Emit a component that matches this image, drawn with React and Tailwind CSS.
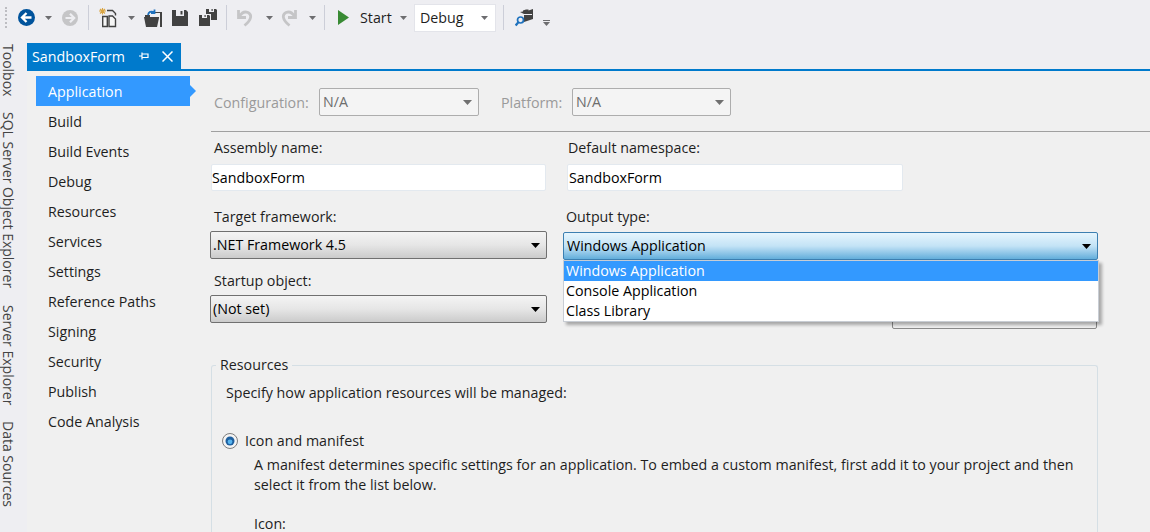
import React from 'react';

const pages = ['Application', 'Build', 'Build Events', 'Debug', 'Resources', 'Services', 'Settings', 'Reference Paths', 'Signing', 'Security', 'Publish', 'Code Analysis'];
const rail = ['Toolbox', 'SQL Server Object Explorer', 'Server Explorer', 'Data Sources'];

const Caret = ({ className = '' }) => (
  <svg width="7" height="4" viewBox="0 0 7 4" className={`shrink-0 ${className}`}>
    <path d="M0 0h7L3.5 4z" fill="#6d6d70" />
  </svg>
);

const Sep = ({ className = '' }) => <div className={`w-px h-[25px] bg-[#ccced8] shrink-0 ${className}`} />;

const Back = () => (
  <svg width="17" height="17" viewBox="0 0 17 17" className="shrink-0">
    <circle cx="8.5" cy="8.5" r="8.5" fill="#00539c" />
    <path d="M8.5 4 4 8.5 8.5 13M4.5 8.5H13.5" fill="none" stroke="#fff" strokeWidth="2.3" />
  </svg>
);

const Forward = () => (
  <svg width="16" height="16" viewBox="0 0 16 16" className="shrink-0">
    <circle cx="8" cy="8" r="8" fill="#c5c5c7" />
    <path d="M8 3.8 12.2 8 8 12.2M11.8 8H3.5" fill="none" stroke="#eeeef2" strokeWidth="2.2" />
  </svg>
);

const NewProject = () => (
  <svg width="18" height="20" viewBox="0 0 18 20" className="shrink-0">
    <path d="M0 3h7M3.5 0v6.5M1 1l5 4.5M6 1 1 5.5" stroke="#d9a441" strokeWidth="1.1" />
    <path d="M8 2.5h5.5l3 3v2" fill="none" stroke="#424242" strokeWidth="1.4" />
    <path d="M3.7 8.5v10h4.6v-10z" fill="#f6f6f6" stroke="#424242" strokeWidth="1.4" />
    <path d="M10 8h3.5l3 3v7.5H10z" fill="#f6f6f6" stroke="#424242" strokeWidth="1.4" />
  </svg>
);

const OpenFolder = () => (
  <svg width="18" height="18" viewBox="0 0 18 18" className="shrink-0">
    <path d="M1 6h5v2h-5z" fill="#424242" />
    <path d="M8 3h10v15h-2V5H8z" fill="#424242" />
    <path d="M11 4h5v13h-1V8h-4z" fill="#f0f0f0" />
    <path d="M0 8h15v1l-2 9H2z" fill="#424242" />
    <path d="M4 6C4.500 3 7 1.800 10 3M10.500.5v3.500H7" fill="none" stroke="#1e71bd" strokeWidth="1.8" />
  </svg>
);

const Save = () => (
  <svg width="16" height="16" viewBox="0 0 16 16" className="shrink-0">
    <path d="M0 0h14l2 2v14H0z" fill="#424242" />
    <path d="M4 0h8v6H4z" fill="#eeeef2" />
    <path d="M8.500 1h2v3.500h-2z" fill="#424242" />
  </svg>
);

const SaveAll = () => (
  <svg width="18" height="17" viewBox="0 0 18 17" className="shrink-0">
    <path d="M7 0h10l1 1v10h-6V5H7z" fill="#424242" />
    <path d="M10 0h5v3h-5z" fill="#eeeef2" />
    <path d="M12.500 0h1.200v2h-1.200z" fill="#424242" />
    <path d="M0 6h10l1 1v10H0z" fill="#424242" />
    <path d="M3 6h5v3H3z" fill="#eeeef2" />
    <path d="M5.500 6h1.200v2H5.500z" fill="#424242" />
  </svg>
);

const Undo = ({ flip }) => (
  <svg width="16" height="18" viewBox="0 0 16 18" className={`shrink-0 ${flip ? '-scale-x-100' : ''}`}>
    <path d="M1.500 1v7.500H9M2.500 7.500C5 3 8.500 2.500 11 3.500c4 2 4 7-3.500 13" fill="none" stroke="#c5c5c7" strokeWidth="2.8" />
  </svg>
);

const Find = () => (
  <svg width="18" height="18" viewBox="0 0 18 18" className="shrink-0">
    <path d="M5 3l3-.5V1.500l3-1h2.500v1L18 0v10l-9 3V5z" fill="#424242" />
    <path d="M9 5.500h8" stroke="#eeeef2" />
    <circle cx="5.500" cy="11" r="3" fill="#eeeef2" stroke="#1e71bd" strokeWidth="1.7" />
    <path d="M3.300 13.300 .7 16.500" stroke="#1e71bd" strokeWidth="2.200" />
  </svg>
);

const Toolbar = () => (
  <div className="h-[43px] pb-[8px] flex items-center text-[14.25px] text-[#1e1e1e] shrink-0">
    <div className="w-[3px] h-[21px] ml-[5px] mr-[10px] border-l-2 border-dotted border-[#bdbdc2] shrink-0" />
    <Back />
    <Caret className="ml-[10px] mr-[10px]" />
    <Forward />
    <Sep className="mx-[10px]" />
    <NewProject />
    <Caret className="ml-[11px] mr-[9px]" />
    <OpenFolder />
    <div className="w-[10px] shrink-0" />
    <Save />
    <div className="w-[11px] shrink-0" />
    <SaveAll />
    <Sep className="ml-[9px] mr-[10px]" />
    <Undo />
    <Caret className="ml-[13px] mr-[8px]" />
    <Undo flip />
    <Caret className="ml-[12px] mr-[8px]" />
    <Sep />
    <svg width="11" height="15" viewBox="0 0 11 15" className="ml-[13px] mr-[11px] shrink-0">
      <path d="M0 0 11 7.500 0 15z" fill="#388a34" />
    </svg>
    <span className="w-[31px] pt-[1px]">Start</span>
    <Caret className="ml-[9px] mr-[7px]" />
    <div className="w-[82px] h-[28px] bg-white border border-[#e3e4ea] flex items-center justify-between pl-[5px] pr-[7px] shrink-0">
      <span className="pt-[1px]">Debug</span>
      <Caret />
    </div>
    <Sep className="ml-[7px] mr-[11px]" />
    <Find />
    <div className="ml-[10px] mt-[10px] flex flex-col gap-[1px]">
      <div className="w-[7px] h-px bg-[#6d6d70]" />
      <Caret />
    </div>
  </div>
);

const Rail = () => (
  <div className="w-[27px] shrink-0 [writing-mode:vertical-rl] flex gap-[16px] text-[14px] leading-[16px] pt-[1px] pr-[11px] text-[#444]">
    {rail.map((name) => <span key={name}>{name}</span>)}
  </div>
);

const Tab = () => (
  <div className="h-[28px] shrink-0 border-b-2 border-[#007acc]">
    <div className="w-[154px] h-[27px] bg-[#007acc] text-white text-[14.25px] flex items-center pl-[5px]">
      <span>SandboxForm</span>
      <svg width="11" height="11" viewBox="0 0 11 11" className="ml-[14px]">
        <path d="M3 1.500v7M3 3h6v3.500H3M0 5h3" fill="none" stroke="#fff" strokeWidth="1.200" />
      </svg>
      <svg width="11" height="11" viewBox="0 0 11 11" className="ml-[12px]">
        <path d="M.5.5l10 10M10.500.5l-10 10" stroke="#fff" strokeWidth="1.500" />
      </svg>
    </div>
  </div>
);

const Sidebar = () => (
  <div className="w-[175px] shrink-0 pt-[5px] pl-[9px]">
    {pages.map((page, i) => (
      <div
        key={page}
        className={`relative w-[154px] h-[30px] pl-[12px] pt-[2px] flex items-center text-[14.25px] ${i === 0 ? 'bg-[#3399ff] text-white' : 'text-[#1e1e1e]'}`}
      >
        {page}
        {i === 0 && (
          <svg width="6" height="12" viewBox="0 0 6 12" className="absolute -right-[6px] top-[9px]">
            <path d="M0 0l6 6-6 6z" fill="#3399ff" />
          </svg>
        )}
      </div>
    ))}
  </div>
);

const Arrow = ({ color = '#000' }) => (
  <svg width="9" height="5" viewBox="0 0 9 5" className="shrink-0">
    <path d="M0 0h9L4.500 5z" fill={color} />
  </svg>
);

const DisabledSelect = ({ className }) => (
  <div className={`${className} h-[28px] rounded-[2px] border border-[#adadad] bg-[#f4f4f4] text-[#6d6d6d] flex items-center justify-between pl-[3px] pr-[6px] shrink-0`}>
    <span>N/A</span>
    <Arrow color="#707070" />
  </div>
);

const Combo = ({ value }) => (
  <div className="w-[337px] -ml-px h-[28px] rounded-[2px] border border-[#707070] bg-linear-to-b from-[#f4f4f4] via-[#e6e6e6] via-50% to-[#cbcbcb] flex items-center justify-between pl-[2px] pr-[6px] text-black">
    <span>{value}</span>
    <Arrow />
  </div>
);

const Input = ({ value, className }) => (
  <div className={`${className} h-[27px] rounded-[2px] border border-[#e3e9ef] bg-white flex items-center text-black`}>
    {value}
  </div>
);

const Form = () => (
  <div className="flex-1 min-w-0 text-[14.25px] leading-[20px] text-[#1e1e1e] pl-[9px]">
    <div className="h-[43px] mt-[17px] pl-[3px] flex items-start gap-[10px] text-[#9a9a9a]">
      <span className="h-[30px] flex items-center w-[95px] shrink-0 whitespace-nowrap">Configuration:</span>
      <DisabledSelect className="w-[160px]" />
      <div className="w-[2px] shrink-0" />
      <span className="h-[30px] flex items-center w-[61px] shrink-0">Platform:</span>
      <DisabledSelect className="w-[159px]" />
    </div>
    <div className="h-px bg-[#a0a0a0]" />

    <div className="flex mt-[6px]">
      <div className="w-[352px] shrink-0">
        <div className="pl-[3px] h-[20px]">Assembly name:</div>
        <Input value="SandboxForm" className="w-[335px] mt-[6px]" />
        <div className="pl-[3px] mt-[16px] h-[20px]">Target framework:</div>
        <div className="mt-[4px]"><Combo value=".NET Framework 4.5" /></div>
        <div className="pl-[3px] mt-[12px] h-[20px]">Startup object:</div>
        <div className="mt-[4px]"><Combo value="(Not set)" /></div>
      </div>

      <div className="flex-1 relative">
        <div className="pl-[5px] h-[20px]">Default namespace:</div>
        <Input value="SandboxForm" className="w-[336px] mt-[6px] ml-[4px] pl-[1px]" />
        <div className="pl-[3px] mt-[16px] h-[20px]">Output type:</div>
        <div className="mt-[5px] w-[535px] h-[28px] rounded-[2px] border border-[#3c7fb1] bg-linear-to-b from-[#e6f5fd] via-[#c3e3f6] via-50% to-[#62aedb] flex items-center justify-between pl-[3px] pr-[6px] text-black">
          <span>Windows Application</span>
          <Arrow />
        </div>
        <div className="ml-[329px] mt-[41px] w-[205px] h-[28px] rounded-[2px] border border-[#8a8a8a]" />
        <div className="absolute left-0 top-[122px] w-[536px] h-[62px] bg-white border border-[#c8cdd4] shadow-[3px_3px_3px_rgba(0,0,0,0.3)] text-black">
          <div className="h-[20px] pl-[2px] bg-[#3399ff] text-white">Windows Application</div>
          <div className="h-[20px] pl-[2px]">Console Application</div>
          <div className="h-[20px] pl-[2px]">Class Library</div>
        </div>
      </div>
    </div>

    <div className="relative mt-[36px] w-[887px] h-[167px] rounded-t-[3px] border border-b-0 border-[#d5dfe5] pl-[14px] pt-[17px]">
      <span className="absolute left-[4px] -top-[11px] px-[4px] bg-[#f0f0f0]">Resources</span>
      <div>Specify how application resources will be managed:</div>
      <div className="flex items-center gap-[7px] mt-[28px] -ml-[4px]">
        <svg width="16" height="16" viewBox="0 0 16 16">
          <circle cx="8" cy="8" r="7.500" fill="#f4f4f4" stroke="#7d7d7d" />
          <circle cx="8" cy="8" r="4.500" fill="#1d5f9f" />
          <circle cx="8" cy="8.800" r="2.400" fill="#58b5ef" />
        </svg>
        <span>Icon and manifest</span>
      </div>
      <div className="pl-[28px] mt-[4px]">
        <div className="whitespace-nowrap">A manifest determines specific settings for an application. To embed a custom manifest, first add it to your project and then</div>
        <div>select it from the list below.</div>
        <div className="mt-[20px] h-[17px] leading-[17px]">Icon:</div>
      </div>
    </div>
  </div>
);

export default function App() {
  return (
    <div className="w-[1150px] h-[532px] overflow-hidden flex flex-col bg-[#eeeef2] font-['Open_Sans','Noto_Sans',sans-serif]">
      <Toolbar />
      <div className="flex flex-1 min-h-0">
        <Rail />
        <div className="flex-1 min-w-0 flex flex-col">
          <Tab />
          <div className="flex flex-1 min-h-0 bg-[#f0f0f0]">
            <Sidebar />
            <Form />
          </div>
        </div>
      </div>
    </div>
  );
}
